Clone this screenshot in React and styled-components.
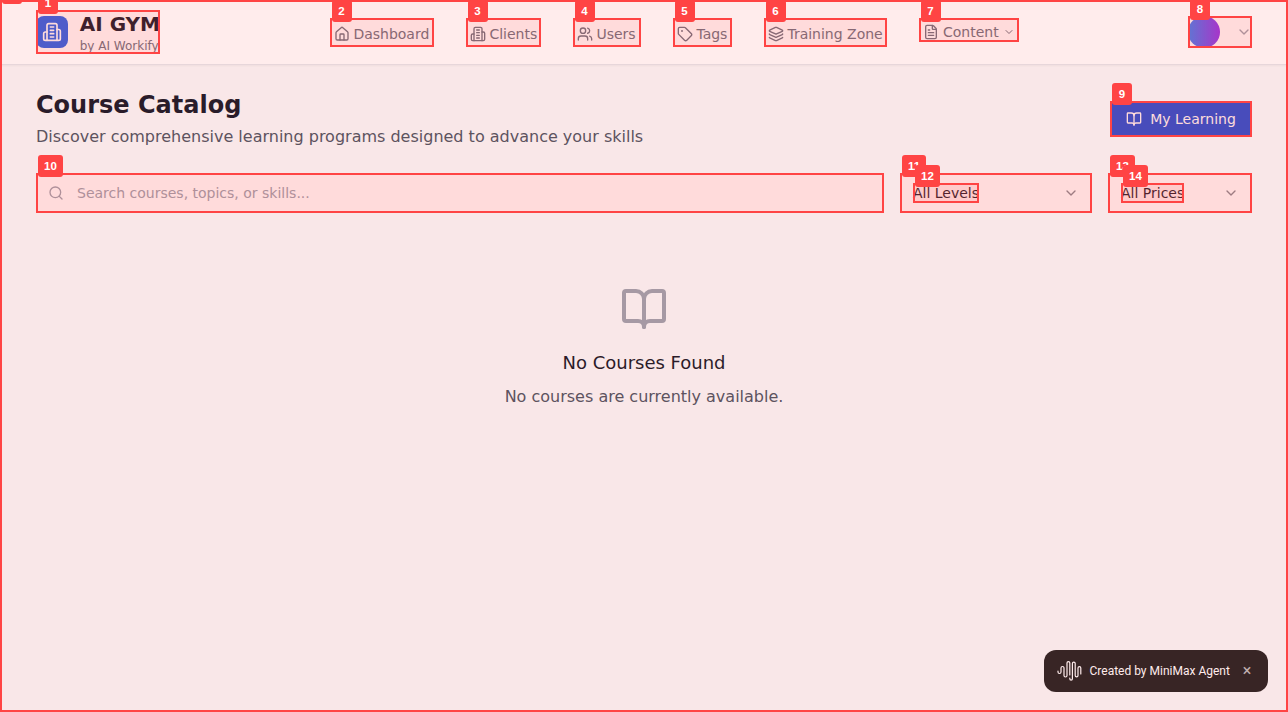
import React from "react";
import styled, { createGlobalStyle } from "styled-components";
import { House, Users, Tag, Layers, FileText, ChevronDown, BookOpen, Search } from "lucide-react";

const Global = createGlobalStyle`
  * { box-sizing: border-box; }
  body { margin: 0; overflow: hidden; font-family: "DejaVu Sans", sans-serif; color: #111827; }
  svg { flex: none; display: block; }
  h1, h3, p { margin: 0; }
`;

const Page = styled.div`
  position: relative;
  height: 100vh;
  overflow: hidden;
  background: #f9fafb;
`;

const Header = styled.header`
  background: #fff;
  border-bottom: 1px solid #e5e7eb;
  box-shadow: 0 1px 2px rgba(0, 0, 0, 0.05);
`;

const HeaderInner = styled.div`
  display: flex;
  justify-content: space-between;
  align-items: center;
  height: 64px;
  padding: 0 36px;
`;

const Outline = styled.span`
  position: absolute;
  inset: 0;
  z-index: ${(p) => (p.$page ? 5 : 6)};
  border: 2px solid #ff4444;
  background: rgba(255, 68, 68, 0.1);
  pointer-events: none;
`;

const Badge = styled.span`
  position: absolute;
  top: -20px;
  left: 0;
  min-width: 20px;
  height: 22px;
  padding: 0 6px;
  border-radius: 3px;
  background: #ff4444;
  color: #fff;
  font: bold 11.5px/22px "Liberation Sans", sans-serif;
  text-align: center;
`;

function Mark({ n, page }) {
  return (
    <Outline $page={page}>
      <Badge>{n}</Badge>
    </Outline>
  );
}

const Building = ({ size }) => (
  <svg width={size} height={size} viewBox="0 0 24 24" fill="none" stroke="currentColor" strokeWidth="2" strokeLinecap="round" strokeLinejoin="round">
    <path d="M6 22V4a2 2 0 0 1 2-2h8a2 2 0 0 1 2 2v18Z" />
    <path d="M6 12H4a2 2 0 0 0-2 2v6a2 2 0 0 0 2 2h2" />
    <path d="M18 9h2a2 2 0 0 1 2 2v9a2 2 0 0 1-2 2h-2" />
    <path d="M10 6h4M10 10h4M10 14h4M10 18h4" />
  </svg>
);

const Brand = styled.div`
  position: relative;
  display: flex;
  align-items: center;
  gap: 12px;
  width: 124px;
  height: 44px;
  white-space: nowrap;
`;

const BrandIcon = styled.div`
  display: grid;
  place-items: center;
  width: 32px;
  height: 32px;
  border-radius: 8px;
  background: #2563eb;
  color: #fff;
`;

const BrandName = styled.h1`
  font-size: 20px;
  line-height: 28px;
`;

const BrandBy = styled.p`
  font-size: 12px;
  line-height: 16px;
  color: #6b7280;
`;

const Nav = styled.nav`
  display: flex;
  align-items: flex-start;
  gap: 32px;
  height: 29px;
`;

const NavItem = styled.a`
  position: relative;
  display: flex;
  align-items: center;
  gap: ${(p) => (p.$menu ? 4.5 : 3.9)}px;
  width: ${(p) => p.$w}px;
  height: ${(p) => (p.$menu ? 24 : 29)}px;
  padding: ${(p) => (p.$menu ? "4px 4px 0" : "3px 4px 0")};
  font-size: 14px;
  line-height: 20px;
  color: #6b7280;
  white-space: nowrap;
`;

const Account = styled.div`
  position: relative;
  display: flex;
  align-items: center;
  justify-content: space-between;
  width: 64px;
  height: 32px;
  color: #9ca3af;
`;

const Avatar = styled.div`
  width: 32px;
  height: 32px;
  border-radius: 50%;
  background: linear-gradient(to right, #3b82f6, #9333ea);
`;

const Main = styled.main`
  padding: 24px 36px;
`;

const TitleRow = styled.div`
  display: flex;
  justify-content: space-between;
  align-items: center;
  margin-bottom: 24px;
`;

const Title = styled.h1`
  font-size: 24px;
  line-height: 32px;
`;

const Subtitle = styled.p`
  margin-top: 4px;
  font-size: 16px;
  line-height: 24px;
  color: #4b5563;
`;

const LearningButton = styled.div`
  position: relative;
  display: flex;
  align-items: center;
  justify-content: center;
  gap: 8px;
  width: 142px;
  height: 36px;
  background: #1d4ed8;
  color: #fff;
  font-size: 14px;
  white-space: nowrap;
`;

const Filters = styled.div`
  display: flex;
  gap: 16px;
`;

const SearchBox = styled.div`
  position: relative;
  display: flex;
  flex: 1;
  align-items: center;
  gap: 13px;
  height: 40px;
  padding: 0 12px;
  background: #fff;
  color: #9ca3af;
  font-size: 14px;
`;

const Select = styled.div`
  position: relative;
  display: flex;
  align-items: center;
  justify-content: space-between;
  width: ${(p) => p.$w}px;
  height: 40px;
  padding: 0 13px;
  background: #fff;
  font-size: 14px;
  line-height: 20px;
  white-space: nowrap;
  > svg { opacity: 0.5; }
`;

const SelectValue = styled.span`
  position: relative;
  height: 20px;
`;

const Empty = styled.section`
  display: flex;
  flex-direction: column;
  align-items: center;
  padding-top: 72px;
  > svg { color: #9ca3af; }
`;

const EmptyTitle = styled.h3`
  margin: 16px 0 8px;
  font-size: 18px;
  line-height: 28px;
  font-weight: 500;
`;

const EmptyText = styled.p`
  font-size: 16px;
  line-height: 24px;
  color: #4b5563;
`;

const Credit = styled.div`
  position: absolute;
  right: 20px;
  bottom: 20px;
  display: flex;
  align-items: center;
  width: 224px;
  height: 42px;
  padding: 0 16px 0 13px;
  border-radius: 12px;
  background: #222;
  color: #fff;
  font: 400 12px/16px Roboto, sans-serif;
  white-space: nowrap;
`;

const CreditText = styled.span`
  margin-left: 7.5px;
`;

const Close = styled.span`
  width: 10px;
  margin-left: auto;
  font-size: 16px;
  text-align: center;
  opacity: 0.7;
`;

const items = [
  [House, "Dashboard", 104],
  [Building, "Clients", 75],
  [Users, "Users", 68],
  [Tag, "Tags", 59],
  [Layers, "Training Zone", 123],
];

export default function App() {
  return (
    <Page>
      <Global />
      <Header>
        <HeaderInner>
          <Brand>
            <BrandIcon><Building size={20} /></BrandIcon>
            <div>
              <BrandName>AI GYM</BrandName>
              <BrandBy>by AI Workify</BrandBy>
            </div>
            <Mark n={1} />
          </Brand>
          <Nav>
            {items.map(([Icon, label, w], i) => (
              <NavItem key={label} $w={w}>
                <Icon size={16} />
                {label}
                <Mark n={i + 2} />
              </NavItem>
            ))}
            <NavItem $menu $w={100}>
              <FileText size={16} />
              Content
              <ChevronDown size={12} />
              <Mark n={7} />
            </NavItem>
          </Nav>
          <Account>
            <Avatar />
            <ChevronDown size={16} />
            <Mark n={8} />
          </Account>
        </HeaderInner>
      </Header>
      <Main>
        <TitleRow>
          <div>
            <Title>Course Catalog</Title>
            <Subtitle>Discover comprehensive learning programs designed to advance your skills</Subtitle>
          </div>
          <LearningButton>
            <BookOpen size={16} />
            My Learning
            <Mark n={9} />
          </LearningButton>
        </TitleRow>
        <Filters>
          <SearchBox>
            <Search size={16} />
            Search courses, topics, or skills...
            <Mark n={10} />
          </SearchBox>
          <Select $w={192}>
            <Mark n={11} />
            <SelectValue>All Levels<Mark n={12} /></SelectValue>
            <ChevronDown size={16} />
          </Select>
          <Select $w={144}>
            <Mark n={13} />
            <SelectValue>All Prices<Mark n={14} /></SelectValue>
            <ChevronDown size={16} />
          </Select>
        </Filters>
        <Empty>
          <BookOpen size={48} />
          <EmptyTitle>No Courses Found</EmptyTitle>
          <EmptyText>No courses are currently available.</EmptyText>
        </Empty>
      </Main>
      <Credit>
        <svg width="25" height="22" viewBox="0 0 25 22" fill="none" stroke="currentColor" strokeWidth="1.2" strokeLinecap="round">
          <path d="M1 11v1a1.5 1.5 0 0 0 3 0V8a1.5 1.5 0 0 1 3 0v7.5a1.5 1.5 0 0 0 3 0V3a1.4 1.4 0 0 1 2.8 0v12" />
          <path d="M12.8 18v.8a1.3 1.3 0 0 0 2.6 0V3.500a1.400 1.400 0 0 1 2.800 0v12a1.400 1.400 0 0 0 2.800 0V8a1.400 1.400 0 0 1 2.800 0v6" />
        </svg>
        <CreditText>Created by MiniMax Agent</CreditText>
        <Close>×</Close>
      </Credit>
      <Mark n={0} page />
    </Page>
  );
}
